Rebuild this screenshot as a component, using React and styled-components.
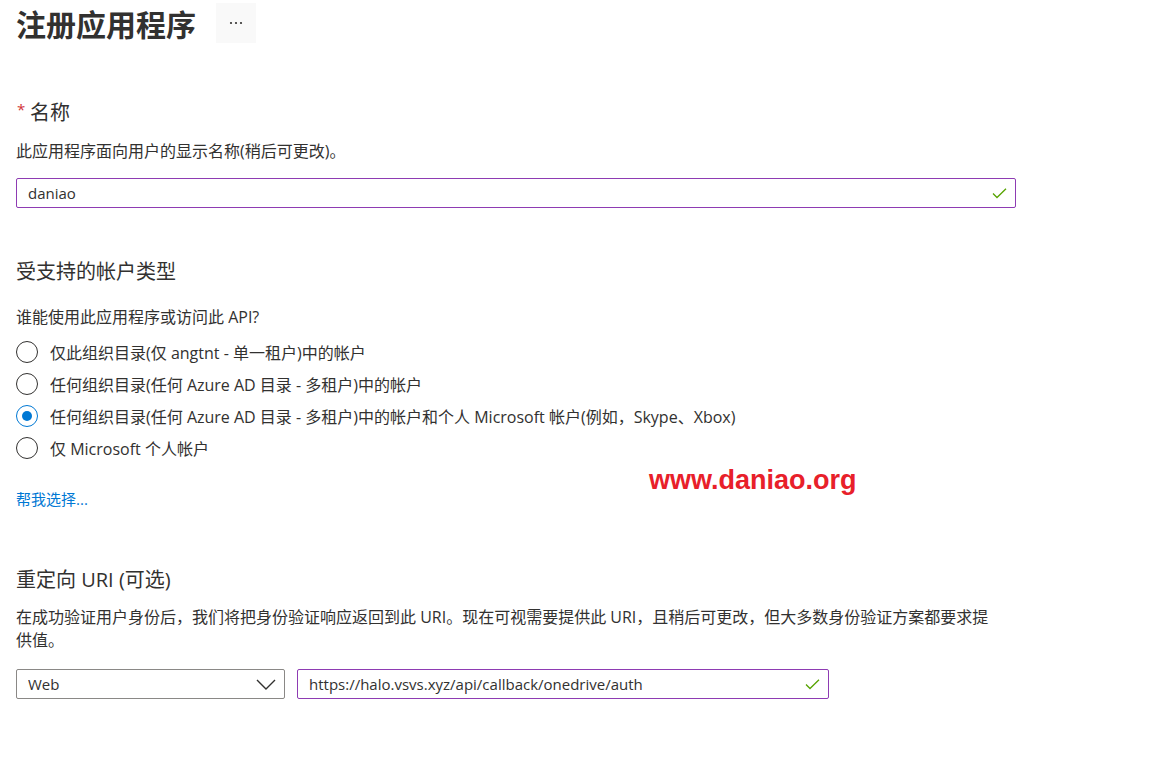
import React from 'react'
import styled, { createGlobalStyle } from 'styled-components'

const GlobalStyle = createGlobalStyle`
  html, body {
    margin: 0;
    padding: 0;
    background: #fff;
  }
  body {
    font-family: "Open Sans", "Noto Sans CJK SC", sans-serif;
    color: #323130;
  }
`

const Page = styled.div`
  position: relative;
  width: 1000px;
  padding: 3px 0 60px 16px;
`

const TitleRow = styled.div`
  display: flex;
  align-items: center;
  height: 40px;
`

const Title = styled.h1`
  margin: 0;
  font-size: 30px;
  line-height: 40px;
  font-weight: 700;
  color: #323130;
  font-family: "Noto Sans CJK SC", sans-serif;
`

const MoreButton = styled.button`
  display: flex;
  align-items: center;
  justify-content: center;
  width: 40px;
  height: 40px;
  margin-left: 20px;
  padding: 0;
  border: none;
  background: #f9f9f9;
  color: #323130;
`

const Label = styled.div`
  display: flex;
  align-items: flex-start;
  margin-top: ${(p) => p.$top || 0}px;
  font-size: 20px;
  line-height: 28px;
  color: #323130;
`

const Required = styled.span`
  color: #d13438;
  font-size: 15px;
  line-height: 20px;
  width: 13px;
  padding-left: 1px;
`

const Text = styled.p`
  margin: ${(p) => p.$top || 0}px 0 0;
  font-size: 16px;
  line-height: ${(p) => p.$lh || 22}px;
  color: #323130;
  max-width: ${(p) => p.$max || 1000}px;
`

const InputBox = styled.div`
  display: flex;
  align-items: center;
  box-sizing: border-box;
  width: ${(p) => p.$width}px;
  height: 30px;
  margin-top: ${(p) => p.$top || 0}px;
  padding: 0 8px 0 11px;
  border: 1px solid ${(p) => (p.$valid ? '#8e3bb3' : '#8a8886')};
  border-radius: 2px;
  background: #fff;
  font-size: 15px;
  color: #323130;
`

const InputValue = styled.span`
  flex: 1;
  white-space: nowrap;
  overflow: hidden;
`

const RadioList = styled.div`
  display: flex;
  flex-direction: column;
  margin-top: 8px;
`

const RadioRow = styled.label`
  display: flex;
  align-items: center;
  height: 32px;
  font-size: 16px;
  color: #323130;
`

const RadioCircle = styled.span`
  display: flex;
  align-items: center;
  justify-content: center;
  box-sizing: border-box;
  width: 22px;
  height: 22px;
  margin-right: 12px;
  border-radius: 50%;
  border: 1px solid ${(p) => (p.$checked ? '#0078d4' : '#323130')};

  &::after {
    content: '';
    display: ${(p) => (p.$checked ? 'block' : 'none')};
    width: 10px;
    height: 10px;
    border-radius: 50%;
    background: #0078d4;
  }
`

const Link = styled.a`
  display: block;
  margin-top: 24px;
  font-size: 15px;
  line-height: 22px;
  color: #0078d4;
  text-decoration: none;
`

const UriRow = styled.div`
  display: flex;
  gap: 12px;
  margin-top: 17px;
`

const Watermark = styled.div`
  position: absolute;
  left: 649px;
  top: 463px;
  font-family: "Liberation Sans", sans-serif;
  font-weight: 700;
  font-size: 27px;
  line-height: 34px;
  color: #e8202a;
`

const Check = () => (
  <svg width="15" height="11" viewBox="0 0 15 11" fill="none">
    <path d="M1 5.5 L5 9.5 L14 0.8" stroke="#57a300" strokeWidth="1.3" />
  </svg>
)

const Chevron = () => (
  <svg width="20" height="11" viewBox="0 0 20 11" fill="none">
    <path d="M1 1 L10 10 L19 1" stroke="#323130" strokeWidth="1.4" />
  </svg>
)

const Dots = () => (
  <svg width="14" height="4" viewBox="0 0 14 4">
    <circle cx="2" cy="2" r="1.1" fill="#323130" />
    <circle cx="7" cy="2" r="1.1" fill="#323130" />
    <circle cx="12" cy="2" r="1.1" fill="#323130" />
  </svg>
)

const accounts = [
  { label: '仅此组织目录(仅 angtnt - 单一租户)中的帐户' },
  { label: '任何组织目录(任何 Azure AD 目录 - 多租户)中的帐户' },
  { label: '任何组织目录(任何 Azure AD 目录 - 多租户)中的帐户和个人 Microsoft 帐户(例如，Skype、Xbox)', checked: true },
  { label: '仅 Microsoft 个人帐户' },
]

const App = () => (
  <Page>
    <GlobalStyle />
    <TitleRow>
      <Title>注册应用程序</Title>
      <MoreButton aria-label="更多">
        <Dots />
      </MoreButton>
    </TitleRow>

    <Label $top={56}>
      <Required>*</Required>
      名称
    </Label>
    <Text $top={13}>此应用程序面向用户的显示名称(稍后可更改)。</Text>
    <InputBox $width={1000} $top={16} $valid>
      <InputValue>daniao</InputValue>
      <Check />
    </InputBox>

    <Label $top={50}>受支持的帐户类型</Label>
    <Text $top={20}>谁能使用此应用程序或访问此 API?</Text>
    <RadioList>
      {accounts.map((a) => (
        <RadioRow key={a.label}>
          <RadioCircle $checked={a.checked} />
          {a.label}
        </RadioRow>
      ))}
    </RadioList>
    <Link href="#">帮我选择...</Link>

    <Label $top={56}>重定向 URI (可选)</Label>
    <Text $top={12} $lh={23} $max={980}>
      在成功验证用户身份后，我们将把身份验证响应返回到此 URI。现在可视需要提供此 URI，且稍后可更改，但大多数身份验证方案都要求提供值。
    </Text>
    <UriRow>
      <InputBox $width={269}>
        <InputValue>Web</InputValue>
        <Chevron />
      </InputBox>
      <InputBox $width={532} $valid>
        <InputValue>https://halo.vsvs.xyz/api/callback/onedrive/auth</InputValue>
        <Check />
      </InputBox>
    </UriRow>

    <Watermark>www.daniao.org</Watermark>
  </Page>
)

export default App
